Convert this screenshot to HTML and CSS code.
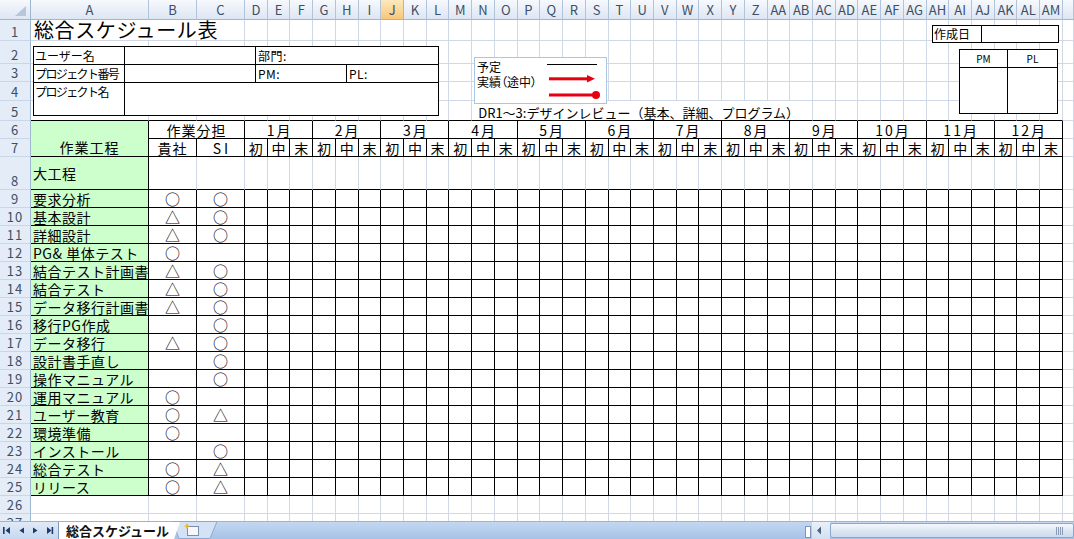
FILE: index.html
```html
<!DOCTYPE html>
<html lang="ja">
<head>
<meta charset="utf-8">
<title>総合スケジュール</title>
<link rel="stylesheet" href="styles.css">
</head>
<body>
<div class="app">
  <div class="sheet">
    <div class="grid" id="grid"></div>

    <div class="shape info">
      <div class="ic k">ユーザー名</div>
      <div class="ic"></div>
      <div class="ic v span2 last">部門:</div>
      <div class="ic k cmp">プロジェクト番号</div>
      <div class="ic"></div>
      <div class="ic v">PM:</div>
      <div class="ic v last">PL:</div>
      <div class="ic k cmp top bot">プロジェクト名</div>
      <div class="ic bot span3 last"></div>
    </div>

    <div class="shape legend">
      <div class="lg-row">
        <span class="lg-k">予定</span>
        <svg class="lg-s" width="56" height="15" viewBox="0 0 56 15"><line x1="0" y1="6.5" x2="50" y2="6.5" stroke="#000" stroke-width="1"/></svg>
      </div>
      <div class="lg-row">
        <span class="lg-k palt">実績（途中）</span>
        <svg class="lg-s" width="56" height="15" viewBox="0 0 56 15"><rect x="2" y="4.3" width="39" height="3" fill="#e60012"/><path d="M40 2 L48 5.8 L40 9.6 Z" fill="#e60012"/></svg>
      </div>
      <div class="lg-row">
        <span class="lg-k"></span>
        <svg class="lg-s" width="56" height="15" viewBox="0 0 56 15"><rect x="2" y="5.5" width="45" height="3" fill="#e60012"/><circle cx="49" cy="7" r="4" fill="#e60012"/></svg>
      </div>
    </div>

    <div class="shape datebox">
      <div class="dk">作成日</div>
      <div></div>
    </div>

    <div class="shape approve">
      <div class="ap h">PM</div>
      <div class="ap h last">PL</div>
      <div class="ap bot"></div>
      <div class="ap bot last"></div>
    </div>
  </div>

  <div class="tabbar">
    <div class="tabnav">
      <svg width="58" height="18" viewBox="0 0 58 18">
        <g fill="#1f3b6b">
          <rect x="3" y="6" width="1.6" height="7"/>
          <path d="M10 6 L5.5 9.5 L10 13 Z"/>
          <path d="M24 6.5 L19.5 9.5 L24 12.5 Z"/>
          <path d="M33 6.5 L37.5 9.5 L33 12.5 Z"/>
          <path d="M47 6 L51.5 9.5 L47 13 Z"/>
          <rect x="51.6" y="6" width="1.6" height="7"/>
        </g>
      </svg>
    </div>
    <div class="tab active">総合スケジュール</div>
    <svg class="tab-add" width="46" height="18" viewBox="0 0 46 18">
      <path d="M0.5 0.5 L45 0.5 L38 17.5 L7 17.5 Z" fill="#d3e2f4" stroke="#8ea9cf"/>
      <rect x="15.5" y="5.5" width="11" height="9" fill="#f4f7fb" stroke="#7d8ea8"/>
      <path d="M15 2 L16 4.5 L18.5 5 L16 5.8 L15 8.5 L14 5.8 L11.5 5 L14 4.5 Z" fill="#f5b800"/>
    </svg>
    <div class="tabfill"></div>
    <div class="hsplit"></div>
    <div class="hbtn">
      <svg width="17" height="18" viewBox="0 0 17 18"><path d="M9 5.5 L5 9.5 L9 13.5 Z" fill="#4d6185"/></svg>
    </div>
    <div class="hthumb">
      <svg class="grip" width="8" height="8" viewBox="0 0 8 8"><g stroke="#8a9bb5"><line x1="0.5" y1="0" x2="0.5" y2="8"/><line x1="2.5" y1="0" x2="2.5" y2="8"/><line x1="4.5" y1="0" x2="4.5" y2="8"/><line x1="6.5" y1="0" x2="6.5" y2="8"/></g></svg>
    </div>
  </div>
</div>
<script src="script.js"></script>
</body>
</html>
```

FILE: styles.css
```css
* { box-sizing: border-box; margin: 0; padding: 0; }
html, body { width: 1074px; height: 539px; overflow: hidden; background: #fff; }
body { font-family: "Noto Sans CJK JP", "Noto Sans", sans-serif; color: #000; }

.app { display: flex; flex-direction: column; width: 1074px; height: 539px; }
.sheet { position: relative; height: 521px; flex: none; overflow: hidden; }

.grid {
  display: grid;
  grid-template-columns: 31px 118px 48px 48px repeat(36, 22.72px) 1fr;
  grid-template-rows: 20px 21px 23px 18px 19px 20px 18px 18px 33px repeat(17, 18px) 18px 18px;
}

/* headers */
.corner {
  position: relative;
  background: linear-gradient(#f6f9fd, #dde6f3);
  border-right: 1px solid #9eb6ce;
  border-bottom: 1px solid #9eb6ce;
}
.corner::after {
  content: "";
  position: absolute;
  left: 15px; top: 6px;
  width: 11px; height: 10px;
  background: #b7c6d9;
  clip-path: polygon(100% 0, 100% 100%, 0 100%);
}
.ch {
  background: linear-gradient(#f6f9fd, #dde6f3);
  border-right: 1px solid #b2c4da;
  border-bottom: 1px solid #9eb6ce;
  color: #3d4f66;
  font-size: 13px;
  line-height: 14px;
  display: flex; align-items: center; justify-content: center;
  white-space: nowrap; overflow: hidden;
}
.ch.sel { background: linear-gradient(#fde8bd, #f8c778); border-right-color: #e2b05e; }
.rh {
  background: #e4ecf7;
  border-right: 1px solid #9eb6ce;
  border-bottom: 1px solid #c9d6e8;
  color: #3d4f66;
  font-size: 13px;
  letter-spacing: 1px;
  line-height: 15px;
  display: flex; align-items: flex-end; justify-content: center;
  padding-bottom: 1px;
  overflow: hidden;
}

/* cells */
.c {
  border-right: 1px solid #d0d7e5;
  border-bottom: 1px solid #d0d7e5;
  display: flex; align-items: center;
  white-space: nowrap;
  font-size: 14px;
  line-height: 1;
  min-width: 0;
}
.br { border-right-color: #000; }
.bb { border-bottom-color: #000; }
.green { background: #ccffcc; }
.mid { justify-content: center; }
.lbl { padding-left: 2px; letter-spacing: 0.5px; }
.hdr { letter-spacing: 1px; }
.mon { letter-spacing: 2px; padding-left: 2px; }
.hdr-a { align-items: flex-end; justify-content: center; padding-bottom: 2px; letter-spacing: 1px; }
.sym { font-size: 15px; line-height: 15px; }
.si { letter-spacing: 3px; padding-left: 3px; }
.title { font-size: 20px; line-height: 20px; padding-left: 3px; letter-spacing: 0.6px; }
.note { font-size: 13px; padding-left: 6px; align-items: flex-end; padding-bottom: 1px; }

.span2 { grid-column: span 2; }
.span3 { grid-column: span 3; }
.span15 { grid-column: span 15; }
.rspan2 { grid-row: span 2; }

/* floating shapes */
.shape { position: absolute; background: #fff; }

.info {
  left: 33px; top: 46px; width: 406px; height: 70px;
  border: 1px solid #000;
  display: grid;
  grid-template-columns: 91px 131px 91px 91px;
  grid-template-rows: 18px 18px 32px;
}
.ic {
  border-right: 1px solid #000;
  border-bottom: 1px solid #000;
  font-size: 12px;
  line-height: 1;
  padding-left: 1px;
  display: flex; align-items: center;
  white-space: nowrap;
}
.ic.last { border-right: none; }
.ic.bot { border-bottom: none; }
.ic.top { align-items: flex-start; padding-top: 3px; }
.ic.v { padding-left: 2px; letter-spacing: 0.5px; }
.cmp { letter-spacing: -1.6px; }

.legend {
  left: 474px; top: 57px; width: 133px; height: 47px;
  border: 1px solid #a9c6e4;
  display: flex; flex-direction: column;
}
.lg-row { display: flex; height: 15px; }
.lg-k { width: 72px; font-size: 12px; line-height: 12px; padding-left: 2px; padding-top: 3px; white-space: nowrap; }
.palt { font-feature-settings: "palt"; }
.lg-s { display: block; flex: none; }

.datebox {
  left: 932px; top: 25px; width: 127px; height: 18px;
  border: 1px solid #000;
  display: grid;
  grid-template-columns: 49px 1fr;
}
.dk { border-right: 1px solid #000; font-size: 12px; line-height: 16px; padding-left: 1px; }

.approve {
  left: 959px; top: 49px; width: 99px; height: 65px;
  border: 1px solid #000;
  display: grid;
  grid-template-columns: 48px 1fr;
  grid-template-rows: 18px 1fr;
}
.ap { border-right: 1px solid #000; border-bottom: 1px solid #000; }
.ap.last { border-right: none; }
.ap.bot { border-bottom: none; }
.ap.h { font-size: 10px; display: flex; align-items: center; justify-content: center; line-height: 1; }

/* sheet tab bar */
.tabbar {
  height: 18px; flex: none;
  display: flex;
  background: linear-gradient(#c3d7f1, #a7c2e8);
  border-top: 1px solid #9ab4d8;
}
.tabnav { width: 58px; flex: none; background: linear-gradient(#e0eaf7, #c6d8f0); }
.tabnav svg { display: block; margin-top: -1px; }
.tab.active {
  width: 122px; flex: none;
  background: #fff;
  border-left: 1px solid #7f98bd;
  clip-path: polygon(0 0, 100% 0, calc(100% - 6px) 100%, 0 100%);
  font-size: 13px; font-weight: bold;
  color: #111;
  padding-left: 7px;
  line-height: 17px;
  white-space: nowrap;
}
.tab-add { display: block; flex: none; margin-left: -8px; margin-top: -1px; }
.tabfill { flex: 1; }
.hsplit {
  width: 6px; height: 12px; margin-top: 4px; flex: none;
  background: #fff;
  border: 1px solid #7f93b3;
}
.hbtn { width: 18px; flex: none; background: linear-gradient(#e9f0f9, #d3e0f1); margin-left: 1px; }
.hbtn svg { display: block; margin-top: -1px; }
.hthumb {
  width: 244px; flex: none;
  margin: 1px 0 1px 0;
  border: 1px solid #8ca6cc;
  border-radius: 2px;
  background: linear-gradient(#f5f8fc, #dbe5f3 55%, #cdd9ec);
  display: flex; align-items: center; justify-content: flex-end;
  padding-right: 9px;
}
.grip { display: block; }
```

FILE: script.js
```js
(function () {
  var grid = document.getElementById('grid');
  var NC = 40;   // columns A..AN
  var AM = 38;   // index of column AM
  var SEL = 9;   // column J selected

  function name(i) {
    var s = '', n = i + 1;
    while (n > 0) {
      var m = (n - 1) % 26;
      s = String.fromCharCode(65 + m) + s;
      n = Math.floor((n - 1) / 26);
    }
    return s;
  }
  function add(cls, text) {
    var d = document.createElement('div');
    d.className = cls;
    if (text) d.textContent = text;
    grid.appendChild(d);
    return d;
  }

  var tasks = [
    ['要求分析', '○', '○'],
    ['基本設計', '△', '○'],
    ['詳細設計', '△', '○'],
    ['PG& 単体テスト', '○', ''],
    ['結合テスト計画書', '△', '○'],
    ['結合テスト', '△', '○'],
    ['データ移行計画書', '△', '○'],
    ['移行PG作成', '', '○'],
    ['データ移行', '△', '○'],
    ['設計書手直し', '', '○'],
    ['操作マニュアル', '', '○'],
    ['運用マニュアル', '○', ''],
    ['ユーザー教育', '○', '△'],
    ['環境準備', '○', ''],
    ['インストール', '', '○'],
    ['総合テスト', '○', '△'],
    ['リリース', '○', '△']
  ];

  add('corner');
  for (var i = 0; i < NC; i++) add('ch' + (i === SEL ? ' sel' : ''), i <= AM ? name(i) : '');

  for (var r = 1; r <= 27; r++) {
    add('rh', String(r));
    var c;
    if (r === 1) {
      add('c title span3', '総合スケジュール表');
      for (c = 3; c < NC; c++) add('c');
    } else if (r === 5) {
      for (c = 0; c < NC;) {
        if (c === 13) {
          add('c note span15 bb', 'DR1～3:デザインレビュー（基本、詳細、プログラム）');
          c += 15;
          continue;
        }
        add('c' + (c <= AM ? ' bb' : ''));
        c++;
      }
    } else if (r === 6) {
      add('c green hdr-a rspan2 br bb', '作業工程');
      add('c mid hdr span2 br bb', '作業分担');
      for (var m = 1; m <= 12; m++) add('c mid mon span3 br bb', m + '月');
      add('c');
    } else if (r === 7) {
      add('c mid hdr br bb', '貴社');
      add('c mid si br bb', 'SI');
      var days = ['初', '中', '末'];
      for (c = 3; c <= AM; c++) add('c mid br bb', days[(c - 3) % 3]);
      add('c');
    } else if (r === 8) {
      add('c green lbl br bb', '大工程');
      for (c = 1; c <= AM; c++) add('c bb' + (c === AM ? ' br' : ''));
      add('c');
    } else if (r >= 9 && r <= 25) {
      var t = tasks[r - 9];
      add('c green lbl br bb', t[0]);
      add('c mid sym br bb', t[1]);
      add('c mid sym br bb', t[2]);
      for (c = 3; c <= AM; c++) add('c br bb');
      add('c');
    } else {
      for (c = 0; c < NC; c++) add('c');
    }
  }
})();
```
